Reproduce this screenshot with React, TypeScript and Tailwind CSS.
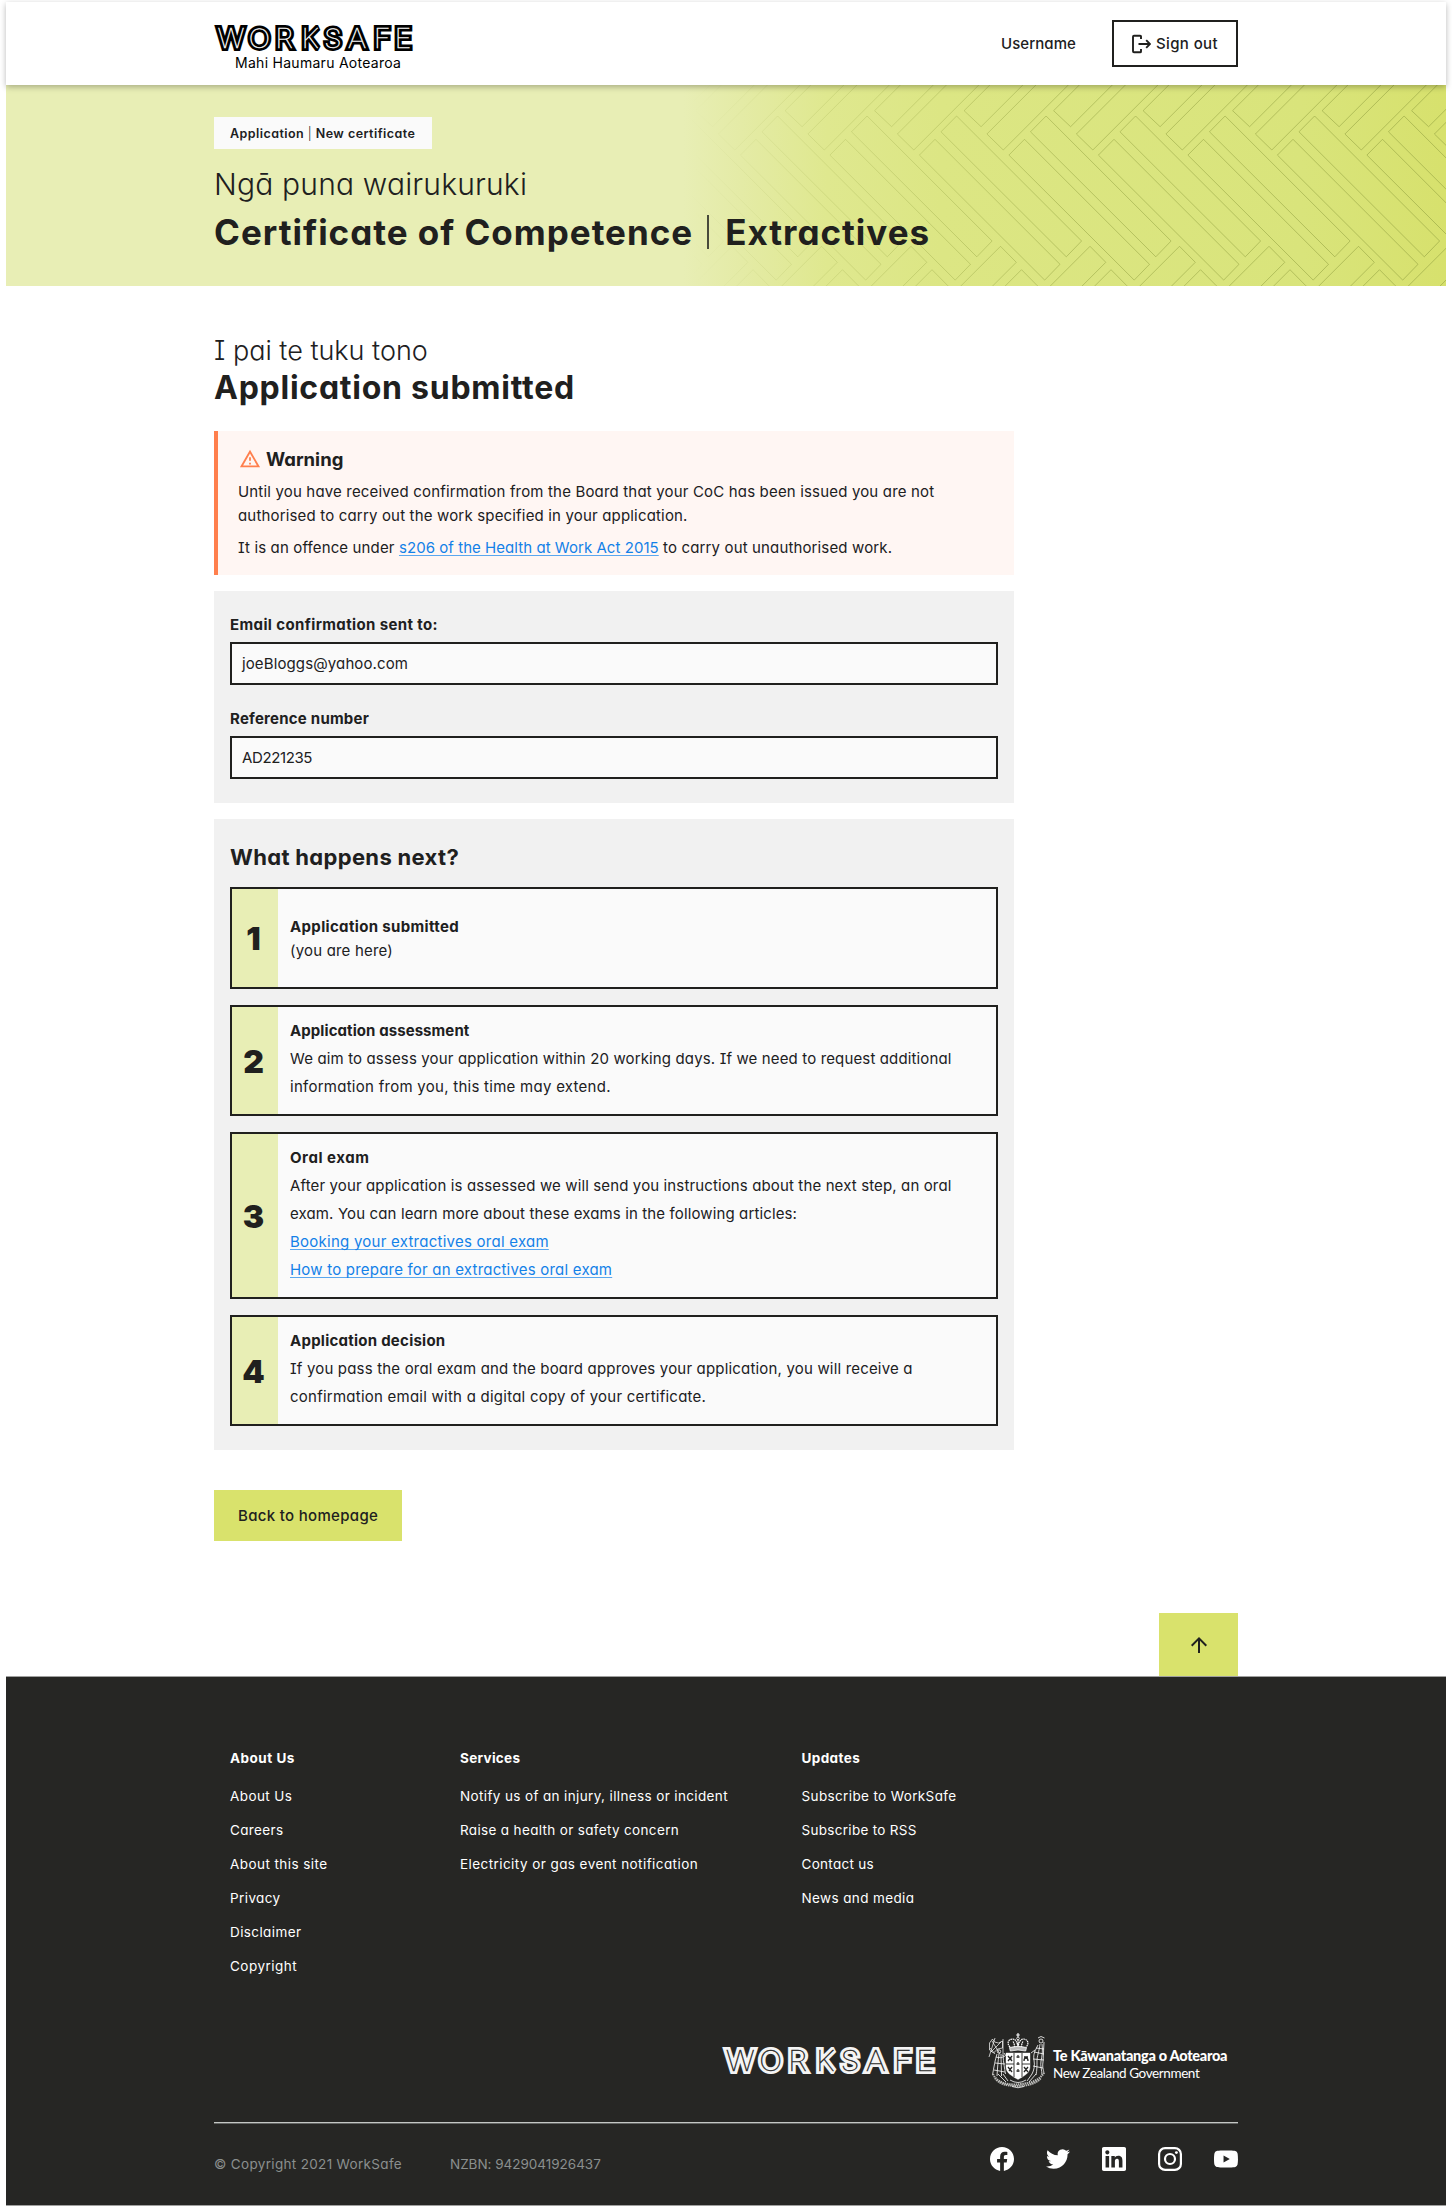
import type { ReactNode } from "react";

type Line = { text: string; tracking: string };

const FACEBOOK =
  "M24 12.073c0-6.627-5.373-12-12-12s-12 5.373-12 12c0 5.99 4.388 10.954 10.125 11.854v-8.385H7.078v-3.47h3.047V9.43c0-3.007 1.792-4.669 4.533-4.669 1.312 0 2.686.235 2.686.235v2.953H15.83c-1.491 0-1.956.925-1.956 1.874v2.25h3.328l-.532 3.47h-2.796v8.385C19.612 23.027 24 18.062 24 12.073z";
const TWITTER =
  "M23.953 4.57a10 10 0 01-2.825.775 4.958 4.958 0 002.163-2.723c-.951.555-2.005.959-3.127 1.184a4.92 4.92 0 00-8.384 4.482C7.69 8.095 4.067 6.13 1.64 3.162a4.822 4.822 0 00-.666 2.475c0 1.71.87 3.213 2.188 4.096a4.904 4.904 0 01-2.228-.616v.06a4.923 4.923 0 003.946 4.827 4.996 4.996 0 01-2.212.085 4.936 4.936 0 004.604 3.417 9.867 9.867 0 01-6.102 2.105c-.39 0-.779-.023-1.17-.067a13.995 13.995 0 007.557 2.209c9.053 0 13.998-7.496 13.998-13.985 0-.21 0-.42-.015-.63A9.935 9.935 0 0024 4.59z";
const LINKEDIN =
  "M20.447 20.452h-3.554v-5.569c0-1.328-.027-3.037-1.852-3.037-1.853 0-2.136 1.445-2.136 2.939v5.667H9.351V9h3.414v1.561h.046c.477-.9 1.637-1.85 3.37-1.85 3.601 0 4.267 2.37 4.267 5.455v6.286zM5.337 7.433c-1.144 0-2.063-.926-2.063-2.065 0-1.138.92-2.063 2.063-2.063 1.14 0 2.064.925 2.064 2.063 0 1.139-.925 2.065-2.064 2.065zm1.782 13.019H3.555V9h3.564v11.452zM22.225 0H1.771C.792 0 0 .774 0 1.729v20.542C0 23.227.792 24 1.771 24h20.451C23.2 24 24 23.227 24 22.271V1.729C24 .774 23.2 0 22.222 0h.003z";
const YOUTUBE =
  "M23.498 6.186a3.016 3.016 0 0 0-2.122-2.136C19.505 3.545 12 3.545 12 3.545s-7.505 0-9.377.505A3.017 3.017 0 0 0 .502 6.186C0 8.07 0 12 0 12s0 3.93.502 5.814a3.016 3.016 0 0 0 2.122 2.136c1.871.505 9.376.505 9.376.505s7.505 0 9.377-.505a3.015 3.015 0 0 0 2.122-2.136C24 15.93 24 12 24 12s0-3.93-.502-5.814zM9.545 15.568V8.432L15.818 12l-6.273 3.568z";

function WorksafeLogo({ width, height, ink, gap }: { width: number; height: number; ink: string; gap: string }) {
  const x = "15.4 41.2 63.9 87.4 108.2 130 153 171.8";
  return (
    <svg width={width} height={height} viewBox="0 0 199 25" className="overflow-visible" role="img">
      <g
        transform="scale(1.1 1)"
        fontFamily="Inter"
        fontWeight="100"
        fontSize="26.4"
        textAnchor="middle"
        strokeLinejoin="miter"
        strokeMiterlimit="2"
      >
        <text x={x} y="22" fill={ink} stroke={ink} strokeWidth="5.8">WORKSAFE</text>
        <text x={x} y="22" fill={gap} stroke={gap} strokeWidth="0.35">WORKSAFE</text>
      </g>
    </svg>
  );
}

const STEP = 89.5;
const PERIODS = [-8, -7, -6, -5, -4, -3, -2, -1, 0, 1, 2, 3, 4, 5, 6];

function HeroPattern() {
  return (
    <svg className="absolute inset-0" width="1440" height="201" viewBox="6 85 1440 201" fill="none">
      <defs>
        <linearGradient id="weave" gradientUnits="userSpaceOnUse" x1="690" y1="0" x2="1446" y2="0">
          <stop offset="0" stopColor="#8d9c3c" stopOpacity="0" />
          <stop offset="0.2" stopColor="#8d9c3c" stopOpacity="0.22" />
          <stop offset="0.5" stopColor="#8d9c3c" stopOpacity="0.48" />
          <stop offset="1" stopColor="#8d9c3c" stopOpacity="0.55" />
        </linearGradient>
      </defs>
      <g stroke="url(#weave)" strokeWidth="1">
        {PERIODS.map((i) => {
          const o = i * STEP;
          return (
            <path
              key={i}
              d={[
                `M${1135.6 + o} 116l125 125l-15.3 15.8l-125.3-125z`,
                `M${1114 + o} 139.3l125 125l-15.3 15.8l-125.3-125z`,
                `M${1232.6 + o} 110.7l17 16l125-125l-17-16z`,
                `M${1255.4 + o} 134l16.4 16l125-125l-16.4-16z`,
                `M${1179.5 + o} 246.3l15.8 16l-125 125l-15.8-16z`,
                `M${1200.5 + o} 269.7l15.8 16l-125 125l-15.8-16z`,
              ].join("")}
            />
          );
        })}
      </g>
    </svg>
  );
}

function Crest() {
  return (
    <svg width="58" height="56" viewBox="0 0 58 56" fill="none" stroke="#fff" strokeWidth="0.8">
      <path d="M30 0v4M28.2 2h3.6" strokeWidth="1.1" />
      <circle cx="30" cy="5.4" r="1.3" />
      <path d="M22 14c-4-4-1-8 2.500-8 3 0 4.500 3 5.500 7.500c1-4.500 2.500-7.500 5.500-7.500c3.500 0 6.500 4 2.500 8M30 7v7M25 8.500c1 1.500 1.500 3.500 1.500 5.500M35 8.500c-1 1.500-1.500 3.500-1.500 5.500" strokeDasharray="1.600 .6" strokeWidth="1.200" />
      <path d="M21.500 14.500q8.500-2.500 17 0l-.8 3.500q-7.700-2-15.400 0z" fill="#bbb" />
      <path d="M18 20h24v14c0 6-6 9-12 12.500c-6-3.500-12-6.500-12-12.500z" fill="#fff" strokeWidth=".4" />
      <path d="M26 20v24M34 20v24M18 31h8M34 31h8" stroke="#262624" strokeWidth=".9" />
      <path d="M20 23l4 5M24 23l-4 5M21.500 25.500h2M36 28c0-4 4-4 4 0M36 24h4M20 34l4 5M24 34l-3 4M36 34l4 5M40 34l-4 5" stroke="#262624" strokeWidth="1.300" />
      <path d="M28.300 24h3.400M28.300 31h3.400M28.300 38h3.400M30 22v3M30 29v3M30 36v3" stroke="#262624" strokeWidth="1.200" />
      <path d="M1 24L7 5M1.500 10l3-4 2 3 4 1 4-2v7l-5 1-4 4-4-3zM4 8l8 13M13 9L3 19M15 6v17M2 15l5 6" strokeWidth=".7" />
      <circle cx="11" cy="18.500" r="1.700" />
      <path d="M9 21c-2 6-3 13-4.500 21M11 21c-1 7-1.500 14-2 22M13 21c0 8 .5 14 .5 22M15 22c.5 8 1.500 13 2.500 19M8 24c3 1 6 1 9-1M7 30l10 1M6 37l11 2M16 20l2 3" />
      <circle cx="53" cy="8" r="2" />
      <path d="M50 5l3-1.500 3.500 1.500M50 12c-3 6-5 9-4 15s0 10-2 14M52 11c-1 8-3 12-3 17s0 9-1 14M54 11c1 7 0 12-1 17s1 9 1 14M56 9l-1 20c-1 6 1 9 1 12M46 19l10 2M45 26l11 1M45 33l10 2M48 15l8 1M43 20l4-3" />
      <path d="M5 41c2 5 8 9 15 10s14 0 20-1 13-5 16-10M7 45c3 5 10 8 22 8s20-3 24-8" strokeDasharray="1.500 .7" strokeWidth="2" stroke="#b9b9b7" />
      <path d="M10 41l8 8M15 41l5 7M48 41l-7 8M44 41l-5 7M22 47q8 5 16 0M24 53.500q6 2.500 12 0" />
    </svg>
  );
}

function Step({ n, tall, pad, children }: { n: number; tall: string; pad: string; children: ReactNode }) {
  return (
    <li className={"flex border-2 border-[#20201e] bg-[#fafafa] " + tall}>
      <div className="flex w-[46px] items-center justify-center bg-[#e8eeb5] pr-[3px] pt-[2px] text-[32px] font-black">
        {n}
      </div>
      <div className={"flex flex-col justify-center whitespace-nowrap pl-3 text-[15px] leading-7 " + pad}>{children}</div>
    </li>
  );
}

function FooterColumn({ title, titleTracking, lines, width }: { title: string; titleTracking: string; lines: Line[]; width: string }) {
  return (
    <div className={width}>
      <h3 className={"h-[33px] text-[13.5px] font-bold leading-6 " + titleTracking}>{title}</h3>
      <ul className="text-[13.5px] leading-[34px]">
        {lines.map((l) => (
          <li key={l.text} className={l.tracking}>{l.text}</li>
        ))}
      </ul>
    </div>
  );
}

const ABOUT: Line[] = [
  { text: "About Us", tracking: "tracking-[0.4px]" },
  { text: "Careers", tracking: "tracking-[0.35px]" },
  { text: "About this site", tracking: "tracking-[0.43px]" },
  { text: "Privacy", tracking: "tracking-[0.4px]" },
  { text: "Disclaimer", tracking: "tracking-[0.4px]" },
  { text: "Copyright", tracking: "tracking-[0.48px]" },
];
const SERVICES: Line[] = [
  { text: "Notify us of an injury, illness or incident", tracking: "tracking-[0.37px]" },
  { text: "Raise a health or safety concern", tracking: "tracking-[0.34px]" },
  { text: "Electricity or gas event notification", tracking: "tracking-[0.43px]" },
];
const UPDATES: Line[] = [
  { text: "Subscribe to WorkSafe", tracking: "tracking-[0.37px]" },
  { text: "Subscribe to RSS", tracking: "tracking-[0.3px]" },
  { text: "Contact us", tracking: "tracking-[0.3px]" },
  { text: "News and media", tracking: "tracking-[0.38px]" },
];

const LINK =
  "text-[#1381e8] underline decoration-[#5aa7ef] decoration-1 underline-offset-2 [text-decoration-skip-ink:none]";

export default function App() {
  return (
    <div className="h-[2206px] w-[1452px] overflow-hidden bg-white px-[6px] pt-[2px] font-['Inter',sans-serif] text-[#20201e] [font-feature-settings:'cv11','cv08']">
      <header className="relative z-10 flex h-[83px] items-start justify-between bg-white pl-[208px] pr-[208px] shadow-[0_2px_6px_rgba(0,0,0,0.28)]">
        <div className="pt-6 text-black">
          <WorksafeLogo width={199} height={25} ink="#000" gap="#fff" />
          <div className="mt-[2px] pl-[21px] text-[14px] leading-5 tracking-[0.28px] [font-feature-settings:normal]">
            Mahi Haumaru Aotearoa
          </div>
        </div>
        <div className="flex items-center gap-9 pt-[18px] text-[15px] font-medium">
          <span className="pt-0.5 tracking-[0.07px]">Username</span>
          <button className="flex h-[47px] w-[126px] items-center border-2 border-[#20201e] pl-[17px]">
            <svg width="20" height="20" viewBox="0 0 20 20" fill="none" stroke="#20201e" strokeWidth="1.9">
              <path d="M10 5V2.600q0-.9-.9-.9H3q-1 0-1 1v14.600q0 1 1 1h6.100q.9 0 .9-.9V15" />
              <path d="M7.500 10h11M15.200 6.200L19 10l-3.800 3.800" />
            </svg>
            <span className="ml-[5px] pt-0.5 tracking-[0.37px]">Sign out</span>
          </button>
        </div>
      </header>

      <section className="relative h-[201px] bg-[linear-gradient(90deg,#e8eeb5_0%,#e8eeb5_47%,#e4eba6_51%,#dfe88f_57%,#dce684_65%,#d9e47b_90%,#d7e16d_100%)]">
        <HeroPattern />
        <div className="relative whitespace-nowrap pl-[208px] pt-8">
          <div className="flex h-8 w-[218px] items-center bg-[#fafafa] pl-4 pt-0.5 text-[12.5px] font-semibold tracking-[0.45px]">
            Application&nbsp;<span className="font-light">|</span>&nbsp;New certificate
          </div>
          <p className="mt-[13px] text-[30px] font-light leading-[44px] tracking-[0.18px]">Ngā puna wairukuruki</p>
          <h1 className="mt-1 flex text-[35px] font-bold leading-[44px] tracking-[0.99px]">
            Certificate of Competence
            <span className="mt-[5px] ml-[14px] mr-4 h-[34px] w-[2px] bg-[#20201e]/80" />
            Extractives
          </h1>
        </div>
      </section>

      <main className="ml-[208px] w-[800px] whitespace-nowrap">
        <p className="pt-[46px] text-[27px] font-light leading-[38px]">I pai te tuku tono</p>
        <h2 className="text-[32px] font-bold leading-[36px] tracking-[0.750px]">Application submitted</h2>

        <div className="mt-[25px] h-[144px] border-l-4 border-[#ff7f4d] bg-[#fff6f3] pl-5 pt-4 text-[15px] leading-6">
          <div className="flex h-6 items-center gap-[5px]">
            <svg width="22" height="22" viewBox="0 0 24 24" fill="#ff7f4d" className="ml-px">
              <path d="M12 5.990L19.530 19H4.470L12 5.990M12 2L1 21h22L12 2zm1 14h-2v2h2v-2zm0-6h-2v4h2v-4z" />
            </svg>
            <span className="text-[18.5px] font-bold">Warning</span>
          </div>
          <p className="mt-[9px] tracking-[0.17px]">
            Until you have received confirmation from the Board that your CoC has been issued you are not
            <br />
            authorised to carry out the work specified in your application.
          </p>
          <p className="mt-2 tracking-[0.14px]">
            It is an offence under{" "}
            <a className={LINK + " tracking-[0.05px]"}>s206 of the Health at Work Act 2015</a> to carry out unauthorised work.
          </p>
        </div>

        <div className="mt-4 h-[212px] bg-[#f1f1f1] px-4 pt-[22px] text-[15px] leading-6">
          <div className="font-bold tracking-[0.38px]">Email confirmation sent to:</div>
          <div className="mt-[5px] flex h-[43px] items-center border-2 border-[#20201e] bg-[#fafafa] pl-[10px] tracking-[0.120px]">
            joeBloggs@yahoo.com
          </div>
          <div className="mt-[22px] font-bold tracking-[0.23px]">Reference number</div>
          <div className="mt-[5px] flex h-[43px] items-center border-2 border-[#20201e] bg-[#fafafa] pl-[10px] tracking-[-0.38px]">
            AD221235
          </div>
        </div>

        <div className="mt-4 h-[631px] bg-[#f1f1f1] px-4 pt-[22px]">
          <h2 className="text-[22px] font-bold leading-[32px] tracking-[0.33px]">What happens next?</h2>
          <ol className="mt-[14px] flex flex-col gap-4">
            <Step n={1} tall="h-[102px]" pad="pt-0.5">
              <b className="leading-6 tracking-[0.34px]">Application submitted</b>
              <span className="leading-6 tracking-[0.19px]">(you are here)</span>
            </Step>
            <Step n={2} tall="h-[111px]" pad="pb-1">
              <b className="tracking-[0.08px]">Application assessment</b>
              <span className="tracking-[0.14px]">
                We aim to assess your application within 20 working days. If we need to request additional
              </span>
              <span className="tracking-[0.27px]">information from you, this time may extend.</span>
            </Step>
            <Step n={3} tall="h-[167px]" pad="pb-1">
              <b className="tracking-[0.550px]">Oral exam</b>
              <span className="tracking-[0.13px]">
                After your application is assessed we will send you instructions about the next step, an oral
              </span>
              <span className="tracking-[0.13px]">exam. You can learn more about these exams in the following articles:</span>
              <a className={LINK + " tracking-[0.25px]"}>Booking your extractives oral exam</a>
              <a className={LINK + " tracking-[0.21px]"}>How to prepare for an extractives oral exam</a>
            </Step>
            <Step n={4} tall="h-[111px]" pad="pb-1">
              <b className="tracking-[0.25px]">Application decision</b>
              <span className="tracking-[0.18px]">
                If you pass the oral exam and the board approves your application, you will receive a
              </span>
              <span className="tracking-[0.24px]">confirmation email with a digital copy of your certificate.</span>
            </Step>
          </ol>
        </div>

        <button className="mt-10 flex h-[51px] w-[188px] items-center bg-[#d9e26c] pl-6 pt-0.5 text-[15px] font-medium tracking-[0.32px]">
          Back to homepage
        </button>
      </main>

      <div className="flex justify-end pr-[208px] pt-[72px]">
        <button className="flex h-[63px] w-[79px] items-center justify-center bg-[#d9e26c]">
          <svg width="24" height="24" viewBox="0 0 24 24" fill="#20201e">
            <path d="M4 12l1.410 1.410L11 7.830V20h2V7.830l5.580 5.590L20 12l-8-8-8 8z" />
          </svg>
        </button>
      </div>

      <footer className="flex h-[530px] flex-col border-y border-[#a0a09f] bg-[#262624] px-[208px] text-white">
        <div className="flex h-[345px] whitespace-nowrap pl-4 pt-[69px]">
          <FooterColumn title="About Us" titleTracking="tracking-[0.500px]" lines={ABOUT} width="w-[230px]" />
          <FooterColumn title="Services" titleTracking="tracking-[0.300px]" lines={SERVICES} width="w-[341.5px]" />
          <FooterColumn title="Updates" titleTracking="tracking-[0.400px]" lines={UPDATES} width="w-[200px]" />
        </div>
        <div className="flex h-[101px] items-start whitespace-nowrap border-b border-[#c4c7c5] pl-[508px] pt-[11px] shadow-[0_1px_0_#646664]">
          <div className="pt-[14px]">
            <WorksafeLogo width={214} height={27} ink="#f4f4f4" gap="#262624" />
          </div>
          <div className="ml-[52px]">
            <Crest />
          </div>
          <div className="ml-[7px] pt-[14px] font-['Lato']">
            <div className="text-[14.5px] font-black leading-[18px] tracking-[-0.28px]">Te Kāwanatanga o Aotearoa</div>
            <div className="text-[13.5px] leading-4 tracking-[-0.4px]">New Zealand Government</div>
          </div>
        </div>
        <div className="flex items-start pt-6 text-[13.5px] leading-5 text-[#8b8f8e]">
          <span className="mt-[7px] w-[236px] tracking-[0.33px]">© Copyright 2021 WorkSafe</span>
          <span className="mt-[7px] tracking-[-0.02px]">NZBN: 9429041926437</span>
          <div className="ml-auto flex gap-8 text-white">
            {[FACEBOOK, TWITTER, LINKEDIN].map((d) => (
              <svg key={d} width="24" height="24" viewBox="0 0 24 24" fill="currentColor">
                <path d={d} />
              </svg>
            ))}
            <svg width="24" height="24" viewBox="0 0 24 24" fill="none" stroke="currentColor" strokeWidth="2.2">
              <rect x="1.100" y="1.100" width="21.800" height="21.800" rx="6" />
              <circle cx="12" cy="12" r="5" />
              <circle cx="18.400" cy="5.600" r="1.450" fill="currentColor" stroke="none" />
            </svg>
            <svg width="24" height="24" viewBox="0 0 24 24" fill="currentColor">
              <path d={YOUTUBE} />
            </svg>
          </div>
        </div>
      </footer>
    </div>
  );
}
